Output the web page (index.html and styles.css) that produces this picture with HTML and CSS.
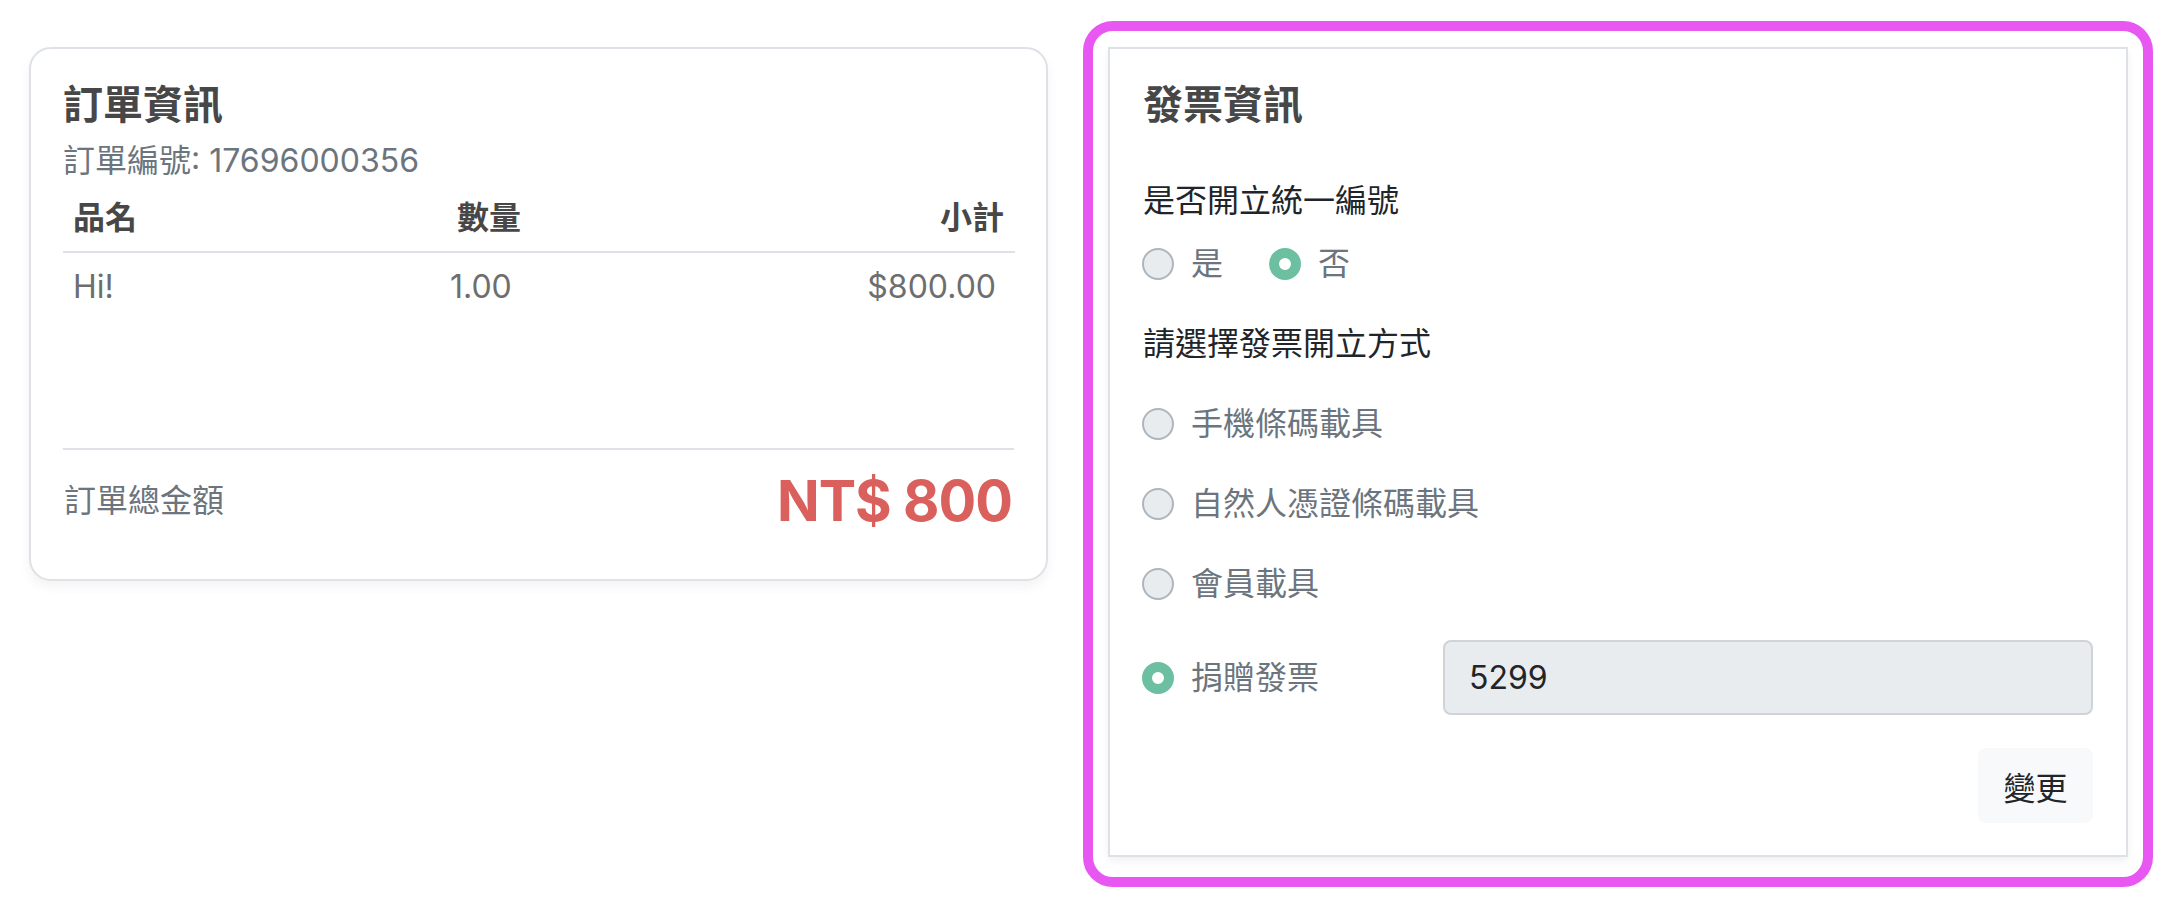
FILE: index.html
```html
<!DOCTYPE html>
<html lang="zh-Hant">
<head>
<meta charset="utf-8">
<title>訂單資訊</title>
<link rel="stylesheet" href="styles.css">
</head>
<body>
<div class="page">
  <div class="col col-left">
    <section class="card order-card">
      <h2 class="card-title">訂單資訊</h2>
      <p class="order-no">訂單編號: 17696000356</p>
      <div class="items">
        <table class="items-table">
          <colgroup><col class="c-name"><col class="c-qty"><col class="c-sub"></colgroup>
          <thead>
            <tr><th class="th-name">品名</th><th class="th-qty">數量</th><th class="th-sub">小計</th></tr>
          </thead>
          <tbody>
            <tr><td class="td-name">Hi!</td><td class="td-qty">1.00</td><td class="td-sub">$800.00</td></tr>
          </tbody>
        </table>
      </div>
      <div class="total">
        <span class="total-label">訂單總金額</span>
        <span class="total-amount">NT$ 800</span>
      </div>
    </section>
  </div>
  <div class="col col-right">
    <div class="highlight">
      <section class="card invoice-card">
        <h2 class="card-title invoice-title">發票資訊</h2>
        <p class="field-label">是否開立統一編號</p>
        <div class="yesno">
          <label class="option"><span class="radio"></span><span class="opt-text">是</span></label>
          <label class="option"><span class="radio checked"></span><span class="opt-text">否</span></label>
        </div>
        <p class="field-label field-gap">請選擇發票開立方式</p>
        <label class="option option-block"><span class="radio"></span><span class="opt-text">手機條碼載具</span></label>
        <label class="option option-block"><span class="radio"></span><span class="opt-text">自然人憑證條碼載具</span></label>
        <label class="option option-block"><span class="radio"></span><span class="opt-text">會員載具</span></label>
        <div class="donate-row">
          <label class="option"><span class="radio checked"></span><span class="opt-text">捐贈發票</span></label>
          <input class="donate-code" type="text" value="5299" readonly>
        </div>
        <div class="actions">
          <button class="btn-change" type="button">變更</button>
        </div>
      </section>
    </div>
  </div>
</div>
</body>
</html>
```

FILE: styles.css
```css
* { box-sizing: border-box; }

html, body {
  margin: 0;
  padding: 0;
  background: #ffffff;
}

body {
  font-family: Inter, "Noto Sans CJK TC", sans-serif;
  font-size: 32px;
  line-height: 48px;
  color: #212529;
}

.page {
  display: flex;
  align-items: flex-start;
  width: 2160px;
}

.col {
  width: 1080px;
  flex: none;
}

.col-left {
  padding: 47px 32px 0 29px;
}

.col-right {
  padding: 21px 0 0 3px;
}

.card {
  background: #ffffff;
  border: 2px solid #dee2e6;
}

.order-card {
  border-radius: 22px;
  padding: 32px 32px 43px 32px;
  box-shadow: 0 6px 12px rgba(0, 0, 0, 0.05);
}

.card-title {
  margin: 0 0 8px 0;
  font-size: 40px;
  line-height: 48px;
  font-weight: 700;
  color: #474747;
}

.order-no {
  margin: 0;
  font-size: 32px;
  line-height: 48px;
  color: #6c757d;
}

.items {
  height: 263px;
}

.items-table {
  width: 100%;
  table-layout: fixed;
  border-collapse: collapse;
}

.c-name { width: 377px; }
.c-qty { width: 300px; }
.c-sub { width: 275px; }

.items-table th {
  padding: 9px 10px;
  font-weight: 700;
  color: #474747;
  text-align: left;
  border-bottom: 2px solid #dee2e6;
}

.items-table th.th-qty {
  padding-left: 17px;
}

.items-table th.th-sub {
  text-align: right;
  padding-right: 11px;
}

.items-table td {
  padding: 10px 10px;
  color: #6e6e6e;
  text-align: left;
}

.items-table td.td-sub {
  text-align: right;
  padding-right: 19px;
}

.total {
  border-top: 2px solid #dee2e6;
  padding-top: 16px;
  height: 88px;
  display: flex;
  justify-content: space-between;
  align-items: center;
}

.total-label {
  color: #6c757d;
  padding-left: 1px;
}

.total-amount {
  font-size: 56px;
  line-height: 70px;
  font-weight: 700;
  letter-spacing: -1px;
  color: #d9605c;
  padding-right: 2px;
}

.highlight {
  width: 1070px;
  border: 10px solid #e957f3;
  border-radius: 30px;
  padding: 16px 15px 20px 15px;
}

.invoice-card {
  padding: 32px 33px;
  box-shadow: 0 4px 8px rgba(0, 0, 0, 0.06);
}

.invoice-title {
  margin-bottom: 48px;
}

.field-label {
  margin: 0;
  color: #212529;
}

.field-gap {
  margin-top: 32px;
}

.yesno {
  margin-top: 15px;
  display: flex;
  gap: 47px;
}

.option {
  display: flex;
  align-items: center;
  gap: 17px;
  color: #6c757d;
}

.option-block {
  margin-top: 32px;
}

.radio {
  flex: none;
  width: 32px;
  height: 32px;
  border-radius: 50%;
  border: 2px solid #adb5bd;
  background: #e9ecef;
  margin-left: -1px;
}

.radio.checked {
  border: 10px solid #6cbfa0;
  background: #ffffff;
}

.donate-row {
  margin-top: 32px;
  display: grid;
  grid-template-columns: 300px 1fr;
  align-items: center;
}

.donate-code {
  width: 100%;
  height: 75px;
  border: 2px solid #ced4da;
  border-radius: 8px;
  background: #e9ecef;
  padding: 0 24px;
  font-family: Inter, "Noto Sans CJK TC", sans-serif;
  font-size: 32px;
  color: #212529;
  outline: none;
}

.actions {
  margin-top: 33px;
  display: flex;
  justify-content: flex-end;
}

.btn-change {
  width: 115px;
  height: 75px;
  border: 2px solid #f8f9fa;
  border-radius: 8px;
  background: #f8f9fa;
  font-family: Inter, "Noto Sans CJK TC", sans-serif;
  font-size: 32px;
  color: #212529;
  padding: 0;
}
```
